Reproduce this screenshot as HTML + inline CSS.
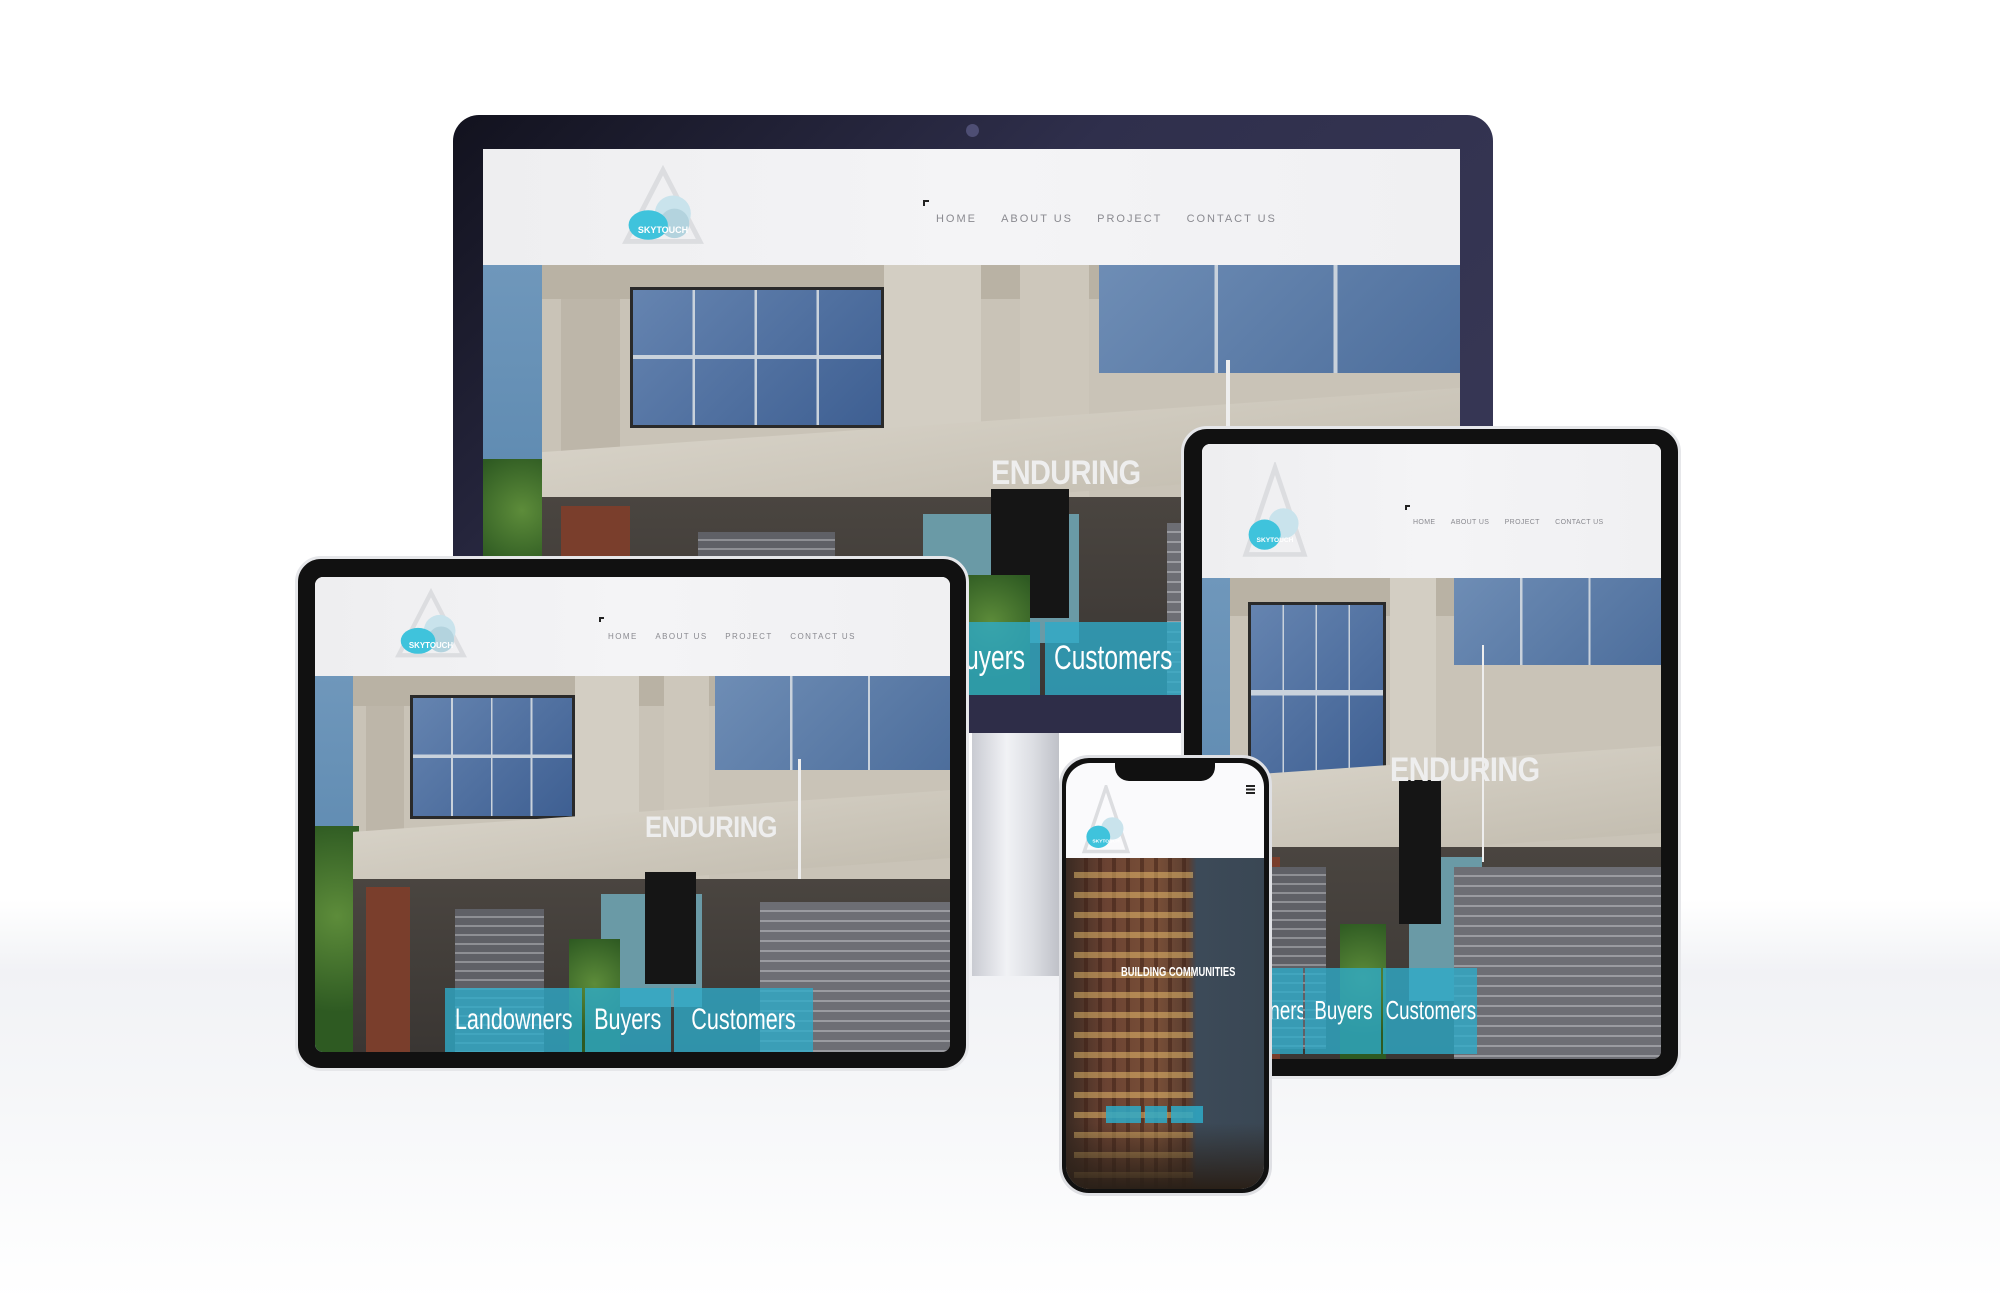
<!DOCTYPE html>
<html><head><meta charset="utf-8"><style>
*{margin:0;padding:0;box-sizing:border-box}
body{width:2000px;height:1300px;position:relative;overflow:hidden;background:#fff;font-family:"Liberation Sans",sans-serif}
.floor{position:absolute;left:0;top:900px;width:2000px;height:400px;background:linear-gradient(#fff,#f1f2f5 18%,#f5f6f8 45%,#fff)}
.abs{position:absolute}
.scr{position:absolute;overflow:hidden;background:#f1f1f3}
.hdr{position:absolute;left:0;top:0;width:100%;background:linear-gradient(90deg,#eeeef0,#f4f4f6 50%,#f0f0f2)}
.nav{position:absolute;color:#8a8a90;letter-spacing:.18em;white-space:nowrap}
.nav span{margin-right:2.2em}
.hero{position:absolute;left:0;width:100%;overflow:hidden;background:#c9c3b7}
.hero div{position:absolute}
.sky{left:0;top:0;width:6%;height:100%;background:linear-gradient(#6f97bb,#4f7fa8)}
.tree{background:radial-gradient(circle at 50% 40%,#5d8c3a,#2e5a22 70%)}
.topb{left:6%;top:0;width:94%;height:8%;background:#b9b2a4}
.win1{left:15%;top:5%;width:26%;height:33%;border:3px solid #2a2a2a;
 background-image:linear-gradient(90deg,transparent 24%,#c9d2dc 24%,#c9d2dc 25%,transparent 25%,transparent 49%,#c9d2dc 49%,#c9d2dc 50%,transparent 50%,transparent 74%,#c9d2dc 74%,#c9d2dc 75%,transparent 75%),linear-gradient(transparent 48%,#c9d2dc 48%,#c9d2dc 51%,transparent 51%),linear-gradient(135deg,#6584b0,#3e5f92)}
.win2{left:63%;top:0;width:37%;height:25%;background-image:linear-gradient(90deg,transparent 32%,#c9d2dc 32%,#c9d2dc 33%,transparent 33%,transparent 65%,#c9d2dc 65%,#c9d2dc 66%,transparent 66%),linear-gradient(135deg,#6e8db5,#4d6e9c)}
.col1{left:8%;top:8%;width:6%;height:50%;background:#bdb6a9}
.col2{left:41%;top:0;width:10%;height:56%;background:#d3cec3}
.col3{left:55%;top:0;width:7%;height:56%;background:#cdc7bb}
.band{left:6%;top:36%;width:94%;height:18%;background:linear-gradient(175deg,#d6d1c6,#c4beb1);transform:skewY(-4deg)}
.low{left:6%;top:54%;width:94%;height:46%;background:linear-gradient(#4a4540,#3a3633)}
.brick{left:8%;top:56%;width:7%;height:44%;background:#7a3e2c}
.glass{left:45%;top:58%;width:16%;height:30%;background:#6a9aa6}
.sign{left:52%;top:52%;width:8%;height:30%;background:#151515}
.gate{left:70%;top:60%;width:30%;height:40%;background:repeating-linear-gradient(#6d6e74 0 8px,#9a9ba0 8px 10px)}
.gate2{left:22%;top:62%;width:14%;height:38%;background:repeating-linear-gradient(#5f6066 0 7px,#8e8f94 7px 9px)}
.pole{left:76%;top:22%;width:.5%;height:32%;background:#eee}
.endu{left:52%;top:40%;color:#eee;font-weight:bold;letter-spacing:-.02em;white-space:nowrap;transform:scaleX(.85);transform-origin:left}
.btn{top:83%;height:17%;background:rgba(46,170,200,.8);color:#fff;white-space:nowrap;display:flex;align-items:center;justify-content:center;overflow:hidden}
.btn span{display:inline-block;transform:scaleX(.72)}
.bz{position:absolute;background:#111;border-radius:26px}
</style></head><body>
<div class="floor"></div>

<!-- MONITOR -->
<div class="abs" style="left:972px;top:733px;width:87px;height:243px;background:linear-gradient(90deg,#c9cbd2,#f1f2f5 40%,#dcdee3 70%,#bfc1c8)"></div>
<div class="abs" style="left:453px;top:115px;width:1040px;height:618px;border-radius:26px;background:linear-gradient(135deg,#12121e,#2f2f4c 40%,#3a3a58)"></div>
<div class="abs" style="left:966px;top:124px;width:13px;height:13px;border-radius:50%;background:#4e4e74"></div>
<div class="scr" style="left:483px;top:149px;width:977px;height:584px;background:#2e2d48">
 <div class="hdr" style="height:116px">
  <svg class="abs" style="left:139px;top:14px" width="82" height="88" viewBox="0 0 100 100"><polygon points="50,5 95,92 5,92" fill="none" stroke="#dcdde0" stroke-width="6"/><circle cx="62" cy="58" r="22" fill="#c9e3ec"/><circle cx="64" cy="70" r="18" fill="#b3d3de"/><ellipse cx="32" cy="72" rx="24" ry="18" fill="#3fc3dc"/><text x="50" y="82" font-size="11" fill="#fff" font-weight="bold" text-anchor="middle">SKYTOUCH</text></svg>
  <div class="abs" style="left:440px;top:51px;width:6px;height:6px;border-left:2px solid #222;border-top:2px solid #222"></div>
  <div class="nav" style="left:453px;top:64px;font-size:11px"><span>HOME</span><span>ABOUT US</span><span>PROJECT</span><span>CONTACT US</span></div>
 </div>
 <div class="hero" style="top:116px;height:430px;font-size:34px">
  <div class="sky"></div><div class="tree" style="left:0;top:45%;width:8%;height:30%"></div>
  <div class="topb"></div><div class="win1"></div><div class="win2"></div><div class="col1"></div><div class="col2"></div><div class="col3"></div>
  <div class="band"></div><div class="low"></div><div class="brick"></div><div class="gate2"></div><div class="glass"></div><div class="sign"></div><div class="gate"></div>
  <div class="tree" style="left:48%;top:72%;width:8%;height:28%"></div>
  <div class="pole"></div><div class="endu" style="top:44%">ENDURING</div>
  <div class="btn" style="left:36%;width:12%"><span>Landowners</span></div>
  <div class="btn" style="left:48.5%;width:8.5%;justify-content:flex-end"><span>Buyers</span></div>
  <div class="btn" style="left:57.5%;width:14%"><span>Customers</span></div>
 </div>
</div>

<!-- LEFT TABLET -->
<div class="bz" style="left:295px;top:556px;width:674px;height:515px;border:3px solid #e6e7ea"></div>
<div class="scr" style="left:315px;top:577px;width:635px;height:475px;border-radius:8px">
 <div class="hdr" style="height:99px">
  <svg class="abs" style="left:80px;top:8px" width="72" height="80" viewBox="0 0 100 100"><polygon points="50,5 95,92 5,92" fill="none" stroke="#dcdde0" stroke-width="6"/><circle cx="62" cy="58" r="22" fill="#c9e3ec"/><circle cx="64" cy="70" r="18" fill="#b3d3de"/><ellipse cx="32" cy="72" rx="24" ry="18" fill="#3fc3dc"/><text x="50" y="82" font-size="11" fill="#fff" font-weight="bold" text-anchor="middle">SKYTOUCH</text></svg>
  <div class="abs" style="left:284px;top:40px;width:5px;height:5px;border-left:2px solid #222;border-top:2px solid #222"></div>
  <div class="nav" style="left:293px;top:55px;font-size:8px"><span>HOME</span><span>ABOUT US</span><span>PROJECT</span><span>CONTACT US</span></div>
 </div>
 <div class="hero" style="top:99px;height:376px;font-size:30px">
  <div class="sky"></div><div class="tree" style="left:0;top:40%;width:7%;height:60%"></div>
  <div class="topb"></div><div class="win1"></div><div class="win2"></div><div class="col1"></div><div class="col2"></div><div class="col3"></div>
  <div class="band"></div><div class="low"></div><div class="brick"></div><div class="gate2"></div><div class="glass"></div><div class="sign"></div><div class="gate"></div>
  <div class="tree" style="left:40%;top:70%;width:8%;height:30%"></div>
  <div class="pole"></div><div class="endu" style="top:36%">ENDURING</div>
  <div class="btn" style="left:20.5%;width:21.5%"><span>Landowners</span></div>
  <div class="btn" style="left:42.5%;width:13.5%"><span>Buyers</span></div>
  <div class="btn" style="left:56.5%;width:22%"><span>Customers</span></div>
 </div>
</div>

<!-- RIGHT TABLET -->
<div class="bz" style="left:1181px;top:426px;width:500px;height:653px;border:3px solid #e6e7ea"></div>
<div class="scr" style="left:1202px;top:444px;width:459px;height:615px;border-radius:8px">
 <div class="hdr" style="height:134px">
  <svg class="abs" style="left:40px;top:18px" width="66" height="100" viewBox="0 0 70 100"><polygon points="35,3 66,95 4,95" fill="none" stroke="#dcdde0" stroke-width="5"/><circle cx="44" cy="62" r="16" fill="#c9e3ec"/><ellipse cx="24" cy="74" rx="17" ry="16" fill="#3fc3dc"/><text x="35" y="82" font-size="7" fill="#fff" font-weight="bold" text-anchor="middle">SKYTOUCH</text></svg>
  <div class="abs" style="left:203px;top:61px;width:5px;height:5px;border-left:2px solid #222;border-top:2px solid #222"></div>
  <div class="nav" style="left:211px;top:75px;font-size:7px;letter-spacing:.05em"><span>HOME</span><span>ABOUT US</span><span>PROJECT</span><span>CONTACT US</span></div>
 </div>
 <div class="hero" style="top:134px;height:481px;font-size:34px">
  <div class="sky"></div>
  <div class="topb"></div><div class="win1" style="left:10%;width:30%;top:5%;height:38%"></div><div class="win2" style="left:55%;width:45%;height:18%"></div><div class="col2"></div>
  <div class="band" style="top:38%"></div><div class="low" style="top:56%"></div><div class="brick" style="left:10%;top:58%"></div><div class="gate2" style="left:13%;width:14%;top:60%"></div><div class="glass"></div><div class="sign" style="left:43%;top:42%;width:9%;height:30%"></div><div class="gate" style="left:55%;width:45%"></div>
  <div class="tree" style="left:30%;top:72%;width:10%;height:28%"></div>
  <div class="pole" style="left:61%;top:14%;height:45%"></div><div class="endu" style="left:41%;top:36%">ENDURING</div>
  <div class="btn" style="left:1%;width:21%;top:81%;height:18%;font-size:26px"><span>Landowners</span></div>
  <div class="btn" style="left:22.5%;width:16.5%;top:81%;height:18%;font-size:26px"><span>Buyers</span></div>
  <div class="btn" style="left:39.5%;width:20.5%;top:81%;height:18%;font-size:26px"><span>Customers</span></div>
 </div>
</div>

<!-- PHONE -->
<div class="bz" style="left:1059px;top:755px;width:213px;height:441px;border:3px solid #dfe0e4;border-radius:30px"></div>
<div class="scr" style="left:1066px;top:763px;width:198px;height:426px;border-radius:24px;background:#fafafc">
 <div class="abs" style="left:49px;top:0;width:100px;height:18px;background:#111;border-radius:0 0 14px 14px"></div>
 <svg class="abs" style="left:14px;top:22px" width="52" height="70" viewBox="0 0 70 100"><polygon points="35,3 66,95 4,95" fill="none" stroke="#dcdde0" stroke-width="5"/><circle cx="44" cy="62" r="16" fill="#c9e3ec"/><ellipse cx="24" cy="74" rx="17" ry="16" fill="#3fc3dc"/><text x="35" y="82" font-size="7" fill="#fff" font-weight="bold" text-anchor="middle">SKYTOUCH</text></svg>
 <div class="abs" style="left:180px;top:22px;width:9px;height:9px;background:repeating-linear-gradient(#222 0 2px,transparent 2px 3.5px)"></div>
 <div class="abs" style="left:0;top:95px;width:198px;height:331px;background:linear-gradient(90deg,#3a2a22 0%,#6a4232 20%,#7a5038 45%,#5a3d30 62%,#3c4a58 66%,#3a4754 100%)">
  <div class="abs" style="left:4%;top:0;width:60%;height:100%;background:repeating-linear-gradient(#00000000 0 14px,rgba(255,210,120,.45) 14px 20px),repeating-linear-gradient(90deg,transparent 0 10px,rgba(60,30,20,.5) 10px 14px)"></div>
  <div class="abs" style="left:0;top:80%;width:100%;height:20%;background:linear-gradient(transparent,#2a2018)"></div>
  <div class="abs" style="left:28%;top:32%;color:#fff;font-size:13px;font-weight:bold;white-space:nowrap;transform:scaleX(.72);transform-origin:left">BUILDING COMMUNITIES</div>
  <div class="abs" style="left:20%;top:75%;width:18%;height:5%;background:rgba(46,170,200,.85)"></div>
  <div class="abs" style="left:40%;top:75%;width:11%;height:5%;background:rgba(46,170,200,.85)"></div>
  <div class="abs" style="left:53%;top:75%;width:16%;height:5%;background:rgba(46,170,200,.85)"></div>
 </div>
</div>
</body></html>
